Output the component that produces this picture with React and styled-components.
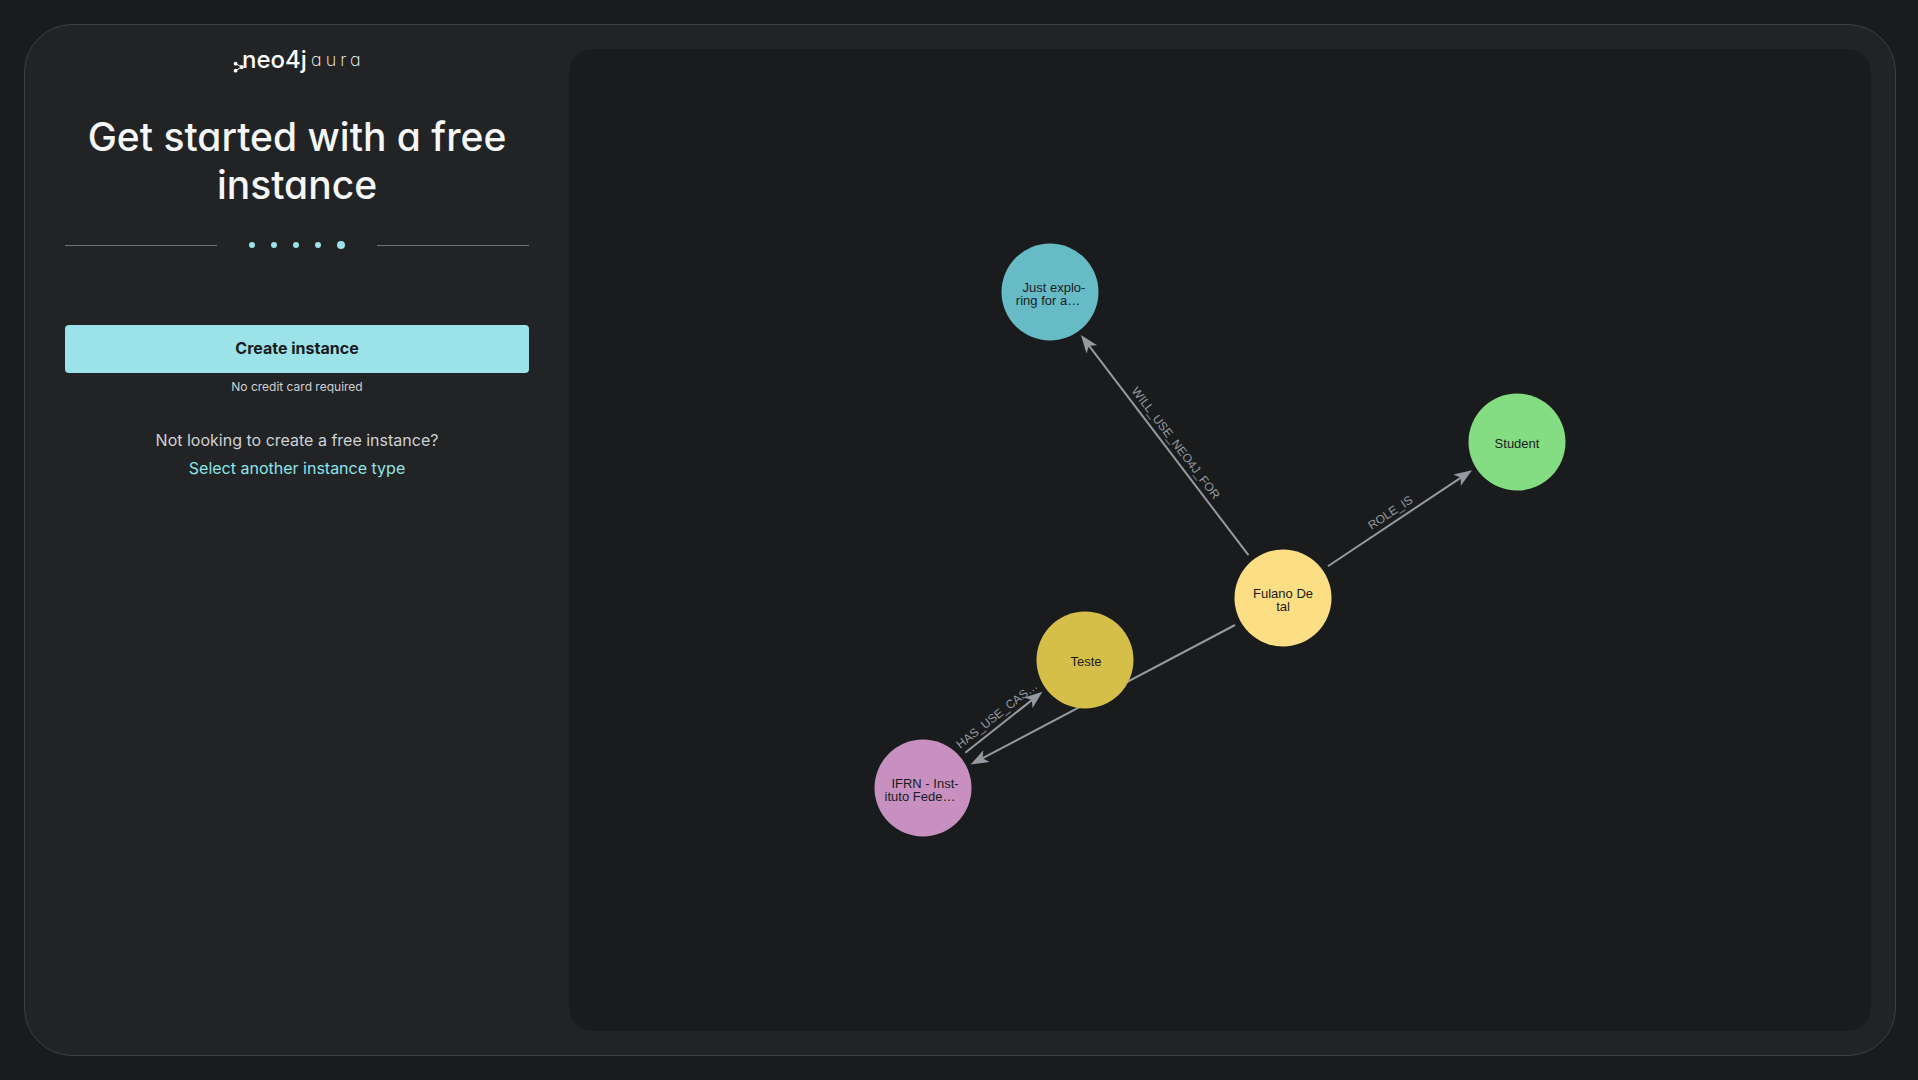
import React from "react";
import styled, { createGlobalStyle } from "styled-components";

const GlobalStyle = createGlobalStyle`
  *, *::before, *::after { box-sizing: border-box; }
  body { margin: 0; background: #1a1b1d; }
`;

const Page = styled.div`
  display: flex;
  min-height: 100vh;
  padding: 24px 22px 24px 24px;
  background: #1a1b1d;
  font-family: Inter, "Open Sans", sans-serif;
  color: #cfd1d4;
`;

const Frame = styled.main`
  display: flex;
  flex: 1;
  gap: 24px;
  min-width: 0;
  padding: 24px;
  border: 1px solid #3c3f44;
  border-radius: 48px;
  background: #212325;
`;

const Sidebar = styled.section`
  display: flex;
  flex-direction: column;
  flex: 0 0 496px;
  padding: 0 16px;
  text-align: center;
`;

const Brand = styled.div`
  display: flex;
  align-items: center;
  justify-content: center;
  height: 24px;
`;

const Title = styled.h1`
  margin: 40px 0 0;
  font-size: 39px;
  font-weight: 500;
  font-feature-settings: "cv11";
  line-height: 48px;
  color: #f5f6f6;
`;

const Steps = styled.div`
  display: flex;
  align-items: center;
  gap: 32px;
  height: 8px;
  margin-top: 32px;
`;

const Rule = styled.span`
  flex: 1;
  height: 1px;
  background: #6f757e;
`;

const Dots = styled.div`
  display: flex;
  align-items: center;
  gap: 16px;
`;

const Dot = styled.span`
  width: ${({ $current }) => ($current ? 8 : 6)}px;
  height: ${({ $current }) => ($current ? 8 : 6)}px;
  border-radius: 50%;
  background: #9be3e8;
`;

const PrimaryButton = styled.button`
  height: 48px;
  margin-top: 76px;
  padding: 0 0 2px;
  border: 0;
  border-radius: 4px;
  background: #9be3e8;
  font: 700 16px/24px Inter, "Open Sans", sans-serif;
  color: #1a1b1d;
  cursor: pointer;
`;

const Caption = styled.p`
  margin: 4px 0 0;
  font-size: 12px;
  line-height: 20px;
`;

const Alternative = styled.div`
  display: flex;
  flex-direction: column;
  align-items: center;
  gap: 4px;
  margin-top: 31px;
  font-size: 16px;
  line-height: 24px;
`;

const Prompt = styled.p`
  margin: 0;
`;

const TextLink = styled.a`
  color: #8fe3e8;
  text-decoration: none;
`;

const GraphPanel = styled.section`
  display: flex;
  flex: 1;
  min-width: 0;
  border-radius: 24px;
  background: #1a1b1d;
  overflow: hidden;
`;

const GraphSvg = styled.svg`
  width: 100%;
  height: auto;
`;

const NodeLabel = styled.text`
  font-family: "Liberation Sans", Arial, sans-serif;
  font-size: 13px;
  text-anchor: middle;
  fill: #1a1b1d;
`;

const EdgeLabel = styled.text`
  font-family: "Liberation Sans", Arial, sans-serif;
  font-size: 12px;
  text-anchor: middle;
  fill: #959aa1;
`;

const LogoSvg = styled.svg`
  flex: none;
  overflow: visible;
`;

const Neo = styled.text`
  font-family: Inter, sans-serif;
  font-size: 24px;
  font-weight: 500;
  font-feature-settings: "cv11";
  fill: #ffffff;
`;

const Aura = styled.text`
  font-family: Inter, sans-serif;
  font-size: 18px;
  font-weight: 200;
  font-feature-settings: "cv11";
  letter-spacing: 4px;
  fill: #ffffff;
`;

function Logo() {
  return (
    <LogoSvg width="128" height="36" viewBox="0 -6 128 36" role="img" aria-label="neo4j aura">
      <path d="M2.6 14.7L8.7 18.1L2.6 21.7" fill="none" stroke="#ffffff" strokeWidth="1" />
      <circle cx="2.6" cy="14.7" r="1.9" fill="#ffffff" />
      <circle cx="8.7" cy="18.1" r="2.1" fill="#ffffff" />
      <circle cx="2.6" cy="21.7" r="1.9" fill="#ffffff" />
      <Neo x="9" y="19">neo4j</Neo>
      <Aura x="78" y="17">aura</Aura>
    </LogoSvg>
  );
}

const nodes = [
  { id: "use", x: 481, y: 243, color: "#67bbc6", lines: [["Just explo-", 4], ["ring for a…", -2]] },
  { id: "role", x: 948, y: 393, color: "#84dd82", lines: [["Student", 0]] },
  { id: "user", x: 714, y: 549, color: "#fcdf85", lines: [["Fulano De", 0], ["tal", 0]] },
  { id: "project", x: 516, y: 611, color: "#d5bf49", lines: [["Teste", 1]] },
  { id: "company", x: 354, y: 739, color: "#c790c0", lines: [["IFRN - Inst-", 2], ["ituto Fede…", -3]] },
];

const edges = [
  { from: "user", to: "use", label: "WILL_USE_NEO4J_FOR", shift: 5 },
  { from: "user", to: "role", label: "ROLE_IS", shift: 5 },
  { from: "user", to: "company" },
  { from: "company", to: "project", label: "HAS_USE_CAS…", shift: 1 },
];

const START_GAP = 55;
const TIP_GAP = 53;
const LANE = -1.5;

function Edge({ from, to, label, shift = 0 }) {
  const a = nodes.find((n) => n.id === from);
  const b = nodes.find((n) => n.id === to);
  const length = Math.hypot(b.x - a.x, b.y - a.y);
  const angle = (Math.atan2(b.y - a.y, b.x - a.x) * 180) / Math.PI;
  const middle = (START_GAP + length - TIP_GAP) / 2 - shift;
  const flipped = Math.abs(angle) > 90;
  const tip = length - TIP_GAP;
  return (
    <g transform={`translate(${a.x} ${a.y}) rotate(${angle}) translate(0 ${LANE})`}>
      {label && (
        <EdgeLabel transform={`translate(${middle} 0) rotate(${flipped ? 180 : 0})`} y="-6">
          {label}
        </EdgeLabel>
      )}
      <path d={`M${START_GAP} 0H${tip - 12}`} stroke="#959aa1" strokeWidth="2" />
      <path d={`M${tip} 0l-18 -6.7l4.5 6.7l-4.5 6.7z`} fill="#959aa1" />
    </g>
  );
}

function Node({ x, y, color, lines }) {
  const first = lines.length === 1 ? 6 : 0;
  return (
    <g transform={`translate(${x} ${y})`}>
      <circle r="48.5" fill={color} />
      {lines.map(([text, dx], i) => (
        <NodeLabel key={text} x={dx} y={first + i * 13}>
          {text}
        </NodeLabel>
      ))}
    </g>
  );
}

export default function App() {
  return (
    <>
      <GlobalStyle />
      <Page>
        <Frame>
          <Sidebar>
            <Brand>
              <Logo />
            </Brand>
            <Title>Get started with a free instance</Title>
            <Steps aria-label="Step 5 of 5">
              <Rule />
              <Dots>
                {[1, 2, 3, 4, 5].map((n) => (
                  <Dot key={n} $current={n === 5} />
                ))}
              </Dots>
              <Rule />
            </Steps>
            <PrimaryButton type="button">Create instance</PrimaryButton>
            <Caption>No credit card required</Caption>
            <Alternative>
              <Prompt>Not looking to create a free instance?</Prompt>
              <TextLink href="#instance-types">Select another instance type</TextLink>
            </Alternative>
          </Sidebar>
          <GraphPanel>
            <GraphSvg viewBox="0 0 1302 982" role="img" aria-label="Graph preview">
              {edges.map((e) => (
                <Edge key={e.from + e.to} {...e} />
              ))}
              {nodes.map((n) => (
                <Node key={n.id} {...n} />
              ))}
            </GraphSvg>
          </GraphPanel>
        </Frame>
      </Page>
    </>
  );
}
